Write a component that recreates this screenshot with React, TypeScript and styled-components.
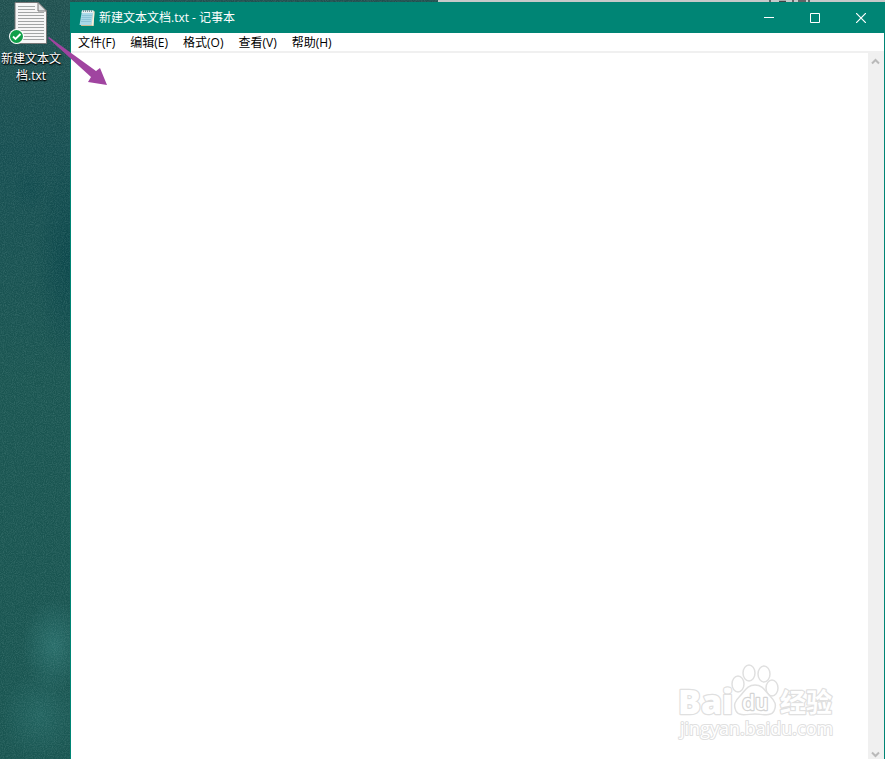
import React, { useState } from "react";
import styled, { createGlobalStyle } from "styled-components";

const GlobalStyle = createGlobalStyle`
  html, body { margin: 0; padding: 0; }
  * { box-sizing: border-box; }
  body {
    font-family: "Open Sans", "Noto Sans CJK SC", sans-serif;
    font-size: 12px;
    overflow: hidden;
  }
`;

const Desktop = styled.main`
  position: relative;
  display: grid;
  grid-template-columns: 70px minmax(0, 1fr);
  grid-template-rows: 2px minmax(0, 1fr);
  height: 100vh;
  overflow: hidden;
  background: #1c5552;
`;

const Wallpaper = styled.svg`
  position: absolute;
  inset: 0;
  width: 100%;
  height: 100%;
`;

const BackWindow = styled.div`
  position: relative;
  grid-column: 2;
  grid-row: 1;
  display: flex;
  justify-content: flex-end;
  margin-left: 368px;
  background: #c6c9c9;
`;

const BackWindowEdge = styled.svg`
  width: 117px;
  height: 2px;
`;

const Shortcuts = styled.aside`
  position: relative;
  grid-column: 1;
  grid-row: 1 / 3;
  padding-top: 2px;
`;

const Shortcut = styled.button`
  display: flex;
  flex-direction: column;
  align-items: center;
  width: 62px;
  padding: 0;
  border: 0;
  background: none;
  color: #fff;
  font: inherit;
  line-height: 17px;
  text-shadow: 1px 1px 2px #000, 0 1px 1px #000;
`;

const FileIcon = styled.svg`
  display: block;
  width: 46px;
  height: 48px;
`;

const Window = styled.section`
  position: relative;
  grid-column: 2;
  grid-row: 2;
  display: flex;
  flex-direction: column;
  min-height: 0;
  background: #fff;
  border: solid #008575;
  border-width: 0 1px;
`;

const TitleBar = styled.header`
  display: flex;
  align-items: center;
  flex: none;
  height: 31px;
  padding-left: 8px;
  background: #008575;
  color: #fff;
`;

const AppIcon = styled.svg`
  flex: none;
  width: 16px;
  height: 18px;
  margin-right: 4px;
`;

const Title = styled.h1`
  flex: 1;
  margin: 0;
  font-size: 12px;
  font-weight: 400;
  line-height: 18px;
  white-space: nowrap;
`;

const Controls = styled.div`
  display: flex;
  height: 100%;
`;

const ControlButton = styled.button`
  display: grid;
  place-items: center;
  width: 46px;
  padding: 0;
  border: 0;
  background: none;
  color: #fff;
  &:hover { background: #1a9183; }
`;

const MenuBar = styled.nav`
  display: flex;
  flex: none;
  gap: 1px;
  height: 20px;
  border-bottom: 2px solid #f0f0f0;
`;

const MenuItem = styled.button`
  padding: 0 7px;
  border: 0;
  background: none;
  color: #000;
  font: inherit;
  line-height: 20px;
  white-space: nowrap;
  &:hover { background: #e5f3ff; }
`;

const Body = styled.div`
  display: flex;
  flex: 1;
  min-height: 0;
`;

const Editor = styled.textarea`
  flex: 1;
  min-width: 0;
  padding: 2px 4px;
  border: 0;
  outline: 0;
  resize: none;
  overflow: hidden;
  background: #fff;
  font: inherit;
`;

const ScrollBar = styled.div`
  display: flex;
  flex-direction: column;
  justify-content: space-between;
  width: 16px;
  background: #f0f0f0;
`;

const ScrollButton = styled.button<{ $height: number }>`
  display: grid;
  place-items: center;
  height: ${(p) => p.$height}px;
  padding: 0;
  border: 0;
  background: none;
`;

const Pointer = styled.svg`
  position: absolute;
  left: 46px;
  top: 34px;
  width: 64px;
  height: 54px;
  pointer-events: none;
`;

const Watermark = styled.svg`
  position: absolute;
  right: 45px;
  bottom: 14px;
  width: 166px;
  height: 84px;
  pointer-events: none;
  font-family: "Open Sans", "Noto Sans CJK SC", sans-serif;

  text { paint-order: stroke; }
`;

const menus = ["文件(F)", "编辑(E)", "格式(O)", "查看(V)", "帮助(H)"];
const lines = [7, 10, 13, 16, 19, 22, 25, 28, 31, 34, 37, 40];

function Backdrop() {
  return (
    <Wallpaper aria-hidden="true">
      <defs>
        <filter id="grain" x="0" y="0" width="100%" height="100%">
          <feTurbulence type="fractalNoise" baseFrequency="0.9" numOctaves="2" seed="4" />
          <feColorMatrix values="0 0 0 0 0.45  0 0 0 0 0.7  0 0 0 0 0.68  1 0 0 0 -0.35" />
        </filter>
        <radialGradient id="glow">
          <stop offset="0" stopColor="#2f7774" stopOpacity="0.7" />
          <stop offset="1" stopColor="#2f7774" stopOpacity="0" />
        </radialGradient>
        <radialGradient id="shade">
          <stop offset="0" stopColor="#084449" stopOpacity="0.75" />
          <stop offset="1" stopColor="#084449" stopOpacity="0" />
        </radialGradient>
        <linearGradient id="base" x2="0" y2="1">
          <stop offset="0" stopColor="#20504f" />
          <stop offset="0.2" stopColor="#174f52" />
          <stop offset="0.5" stopColor="#1a5551" />
          <stop offset="1" stopColor="#195551" />
        </linearGradient>
      </defs>
      <rect width="100%" height="100%" fill="url(#base)" />
      <ellipse cx="70" cy="260" rx="34" ry="110" fill="url(#shade)" />
      <ellipse cx="30" cy="190" rx="18" ry="22" fill="url(#shade)" opacity="0.5" />
      <ellipse cx="54" cy="646" rx="32" ry="46" fill="url(#glow)" />
      <ellipse cx="40" cy="716" rx="38" ry="44" fill="url(#glow)" opacity="0.6" />
      <rect width="100%" height="100%" filter="url(#grain)" opacity="0.3" />
    </Wallpaper>
  );
}

function TextFile() {
  return (
    <FileIcon viewBox="0 0 46 48" aria-hidden="true">
      <path d="M7 0.5H30L38.5 9V41.5H7Z" fill="#f6f6f6" stroke="#777" />
      {lines.map((y) => (
        <path key={y} d={`M10 ${y - 2.5}H${y < 11 ? 27 : 36}`} stroke="#a2a5a5" />
      ))}
      <path d="M30 0.5V9H38.5Z" fill="#e2e4e5" stroke="#777" />
      <circle cx="8.5" cy="34.5" r="7.5" fill="#fff" />
      <circle cx="8.5" cy="34.5" r="6.5" fill="#10a04a" />
      <path d="M5 34.5L7.5 37L12.5 32" fill="none" stroke="#fff" strokeWidth="1.8" />
    </FileIcon>
  );
}

function NotepadIcon() {
  return (
    <AppIcon viewBox="0 0 16 18" aria-hidden="true">
      <path d="M4 2H15.5L14.5 17H2Z" fill="#c9b98f" />
      <path d="M3 1.5H14.5L12.5 16H0.5Z" fill="#a9d9e9" />
      <path d="M3 1.5H14.5L14 4H2.5Z" fill="#e5eff2" />
      <path d="M3 6.5H13M2.5 8.5H12.5M2.5 10.5H12M2 12.5H12" stroke="#8cc4d8" />
      <path d="M4.5 1V3M6.5 1V3M8.5 1V3M10.5 1V3M12.5 1V3" stroke="#7f979d" />
      <path d="M12.5 16L14.5 2L15.5 3L14.5 17Z" fill="#f4efdf" />
    </AppIcon>
  );
}

function Chevron({ down }: { down?: boolean }) {
  return (
    <svg width="10" height="7" viewBox="0 0 10 7" aria-hidden="true">
      <path d={down ? "M1 1.5L4.5 5L8 1.5" : "M1 5.5L4.5 2L8 5.5"} fill="none" stroke="#b9b9b9" strokeWidth="2" />
    </svg>
  );
}

function Logo() {
  return (
    <Watermark viewBox="0 0 166 84" role="img" aria-label="Baidu 经验 jingyan.baidu.com">
      <g fill="#fff" stroke="#e0e0e0" strokeWidth="2.4" strokeLinejoin="round">
        <text x="5" y="53" fontSize="34" fontWeight="800">Bai</text>
        <g strokeWidth="1.5">
          <ellipse cx="65" cy="23" rx="6" ry="8" />
          <ellipse cx="76" cy="12" rx="6" ry="8" />
          <ellipse cx="91" cy="13" rx="6" ry="8" />
          <ellipse cx="99" cy="27" rx="6" ry="8" />
          <path d="M82 24C74 24 72 30 67 35C62 40 60 44 63 50C66 56 75 53 82 53C89 53 98 56 101 50C104 44 102 40 97 35C92 30 90 24 82 24Z" />
        </g>
        <text x="69" y="49" fontSize="21" fontWeight="600" stroke="#d4d4d4">du</text>
        <text x="107" y="51" fontSize="26" fontWeight="700">经验</text>
        <text x="7" y="74" fontSize="18" fontWeight="400" strokeWidth="2">jingyan.baidu.com</text>
      </g>
    </Watermark>
  );
}

export default function App() {
  const [text, setText] = useState("");
  return (
    <>
      <GlobalStyle />
      <Desktop>
        <Backdrop />
        <BackWindow>
          <BackWindowEdge aria-hidden="true">
            <path d="M2 0V2M11 1.5H18M25 0V2M30 1H38M41 0V2" stroke="#414446" strokeWidth="1.5" />
          </BackWindowEdge>
        </BackWindow>
        <Shortcuts>
          <Shortcut type="button">
            <TextFile />
            <span>新建文本文<br />档.txt</span>
          </Shortcut>
        </Shortcuts>
        <Window>
          <TitleBar>
            <NotepadIcon />
            <Title>新建文本文档.txt - 记事本</Title>
            <Controls>
              <ControlButton type="button" aria-label="最小化">
                <svg width="10" height="10"><path d="M0 4.5H10" stroke="currentColor" /></svg>
              </ControlButton>
              <ControlButton type="button" aria-label="最大化">
                <svg width="10" height="10"><path d="M0.5 0.5H9.5V9.5H0.5Z" fill="none" stroke="currentColor" /></svg>
              </ControlButton>
              <ControlButton type="button" aria-label="关闭">
                <svg width="10" height="10"><path d="M0 0L10 10M10 0L0 10" stroke="currentColor" strokeWidth="1.2" /></svg>
              </ControlButton>
            </Controls>
          </TitleBar>
          <MenuBar>
            {menus.map((m) => <MenuItem key={m} type="button">{m}</MenuItem>)}
          </MenuBar>
          <Body>
            <Editor aria-label="文本编辑器" value={text} onChange={(e) => setText(e.target.value)} />
            <ScrollBar>
              <ScrollButton type="button" aria-label="向上滚动" $height={17}><Chevron /></ScrollButton>
              <ScrollButton type="button" aria-label="向下滚动" $height={9}><Chevron down /></ScrollButton>
            </ScrollBar>
          </Body>
          <Logo />
        </Window>
        <Pointer viewBox="0 0 64 54" aria-hidden="true">
          <path d="M2 4L3 3L50 37L54 34L61 51L42 48L45 43Z" fill="#a044a0" />
        </Pointer>
      </Desktop>
    </>
  );
}
